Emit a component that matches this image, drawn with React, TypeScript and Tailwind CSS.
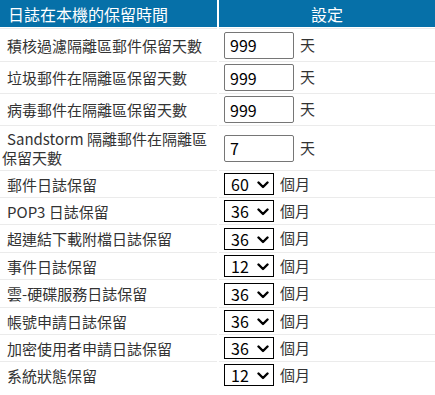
import React from 'react';

const dayRows = [
  { label: '積核過濾隔離區郵件保留天數', value: '999', h: 'h-[33px]' },
  { label: '垃圾郵件在隔離區保留天數', value: '999', h: 'h-[32px]' },
  { label: '病毒郵件在隔離區保留天數', value: '999', h: 'h-[32px]' },
];

const monthRows = [
  { label: '郵件日誌保留', value: '60', h: 'h-[27px]' },
  { label: 'POP3 日誌保留', value: '36', h: 'h-[27px]' },
  { label: '超連結下載附檔日誌保留', value: '36', h: 'h-[28px]' },
  { label: '事件日誌保留', value: '12', h: 'h-[27px]' },
  { label: '雲-硬碟服務日誌保留', value: '36', h: 'h-[28px]' },
  { label: '帳號申請日誌保留', value: '36', h: 'h-[27px]' },
  { label: '加密使用者申請日誌保留', value: '36', h: 'h-[27px]' },
  { label: '系統狀態保留', value: '12', h: 'h-[27px]' },
];

const options = ['1', '3', '6', '12', '24', '36', '48', '60'];

function Row({ h, label, children }: { h: string; label: React.ReactNode; children: React.ReactNode }) {
  return (
    <div className={`flex gap-[2px] ${h}`}>
      <div className="w-[217px] border-t border-[#ebebeb] flex items-center pl-[2px] text-[15px] leading-[19px] text-[#333]">
        <span className="indent-[5px] block">{label}</span>
      </div>
      <div className="flex-1 border-t border-[#ebebeb] flex items-center pl-[5px] gap-[6px] text-[15px] text-[#333]">
        {children}
      </div>
    </div>
  );
}

function DayInput({ value }: { value: string }) {
  return (
    <input
      type="text"
      defaultValue={value}
      className="w-[70px] h-[27px] border border-[#767676] rounded-[2px] px-[5px] text-[16px] text-black outline-none"
    />
  );
}

function MonthSelect({ value }: { value: string }) {
  return (
    <div className="relative w-[50px] h-[22px]">
      <select
        defaultValue={value}
        className="appearance-none w-full h-full border border-black bg-white pl-[6px] text-[16px] leading-[20px] text-black outline-none"
      >
        {options.map((o) => (
          <option key={o} value={o}>{o}</option>
        ))}
      </select>
      <svg
        className="absolute right-[5px] top-[8px] pointer-events-none"
        width="12"
        height="8"
        viewBox="0 0 12 8"
      >
        <path d="M1.5 1.5 L6 6 L10.5 1.5" fill="none" stroke="#000" strokeWidth="2.4" strokeLinecap="round" strokeLinejoin="round" />
      </svg>
    </div>
  );
}

export default function App() {
  return (
    <main className="w-[435px] h-[395px] bg-white font-['Noto_Sans_CJK_TC','Noto_Sans',sans-serif]">
      {/* HEADER */}
      <div className="flex gap-[2px] h-[27px] mb-px text-white text-[16px]">
        <div className="w-[217px] bg-[#0670a8] flex items-center pl-[8px]">日誌在本機的保留時間</div>
        <div className="flex-1 bg-[#0670a8] flex items-center justify-center">設定</div>
      </div>

      {dayRows.map((r) => (
        <Row key={r.label} h={r.h} label={r.label}>
          <DayInput value={r.value} />
          <span>天</span>
        </Row>
      ))}

      <Row
        h="h-[45px]"
        label={
          <>
            Sandstorm 隔離郵件在隔離區
            <br />
            保留天數
          </>
        }
      >
        <DayInput value="7" />
        <span>天</span>
      </Row>

      {monthRows.map((r) => (
        <Row key={r.label} h={r.h} label={r.label}>
          <MonthSelect value={r.value} />
          <span>個月</span>
        </Row>
      ))}
    </main>
  );
}
